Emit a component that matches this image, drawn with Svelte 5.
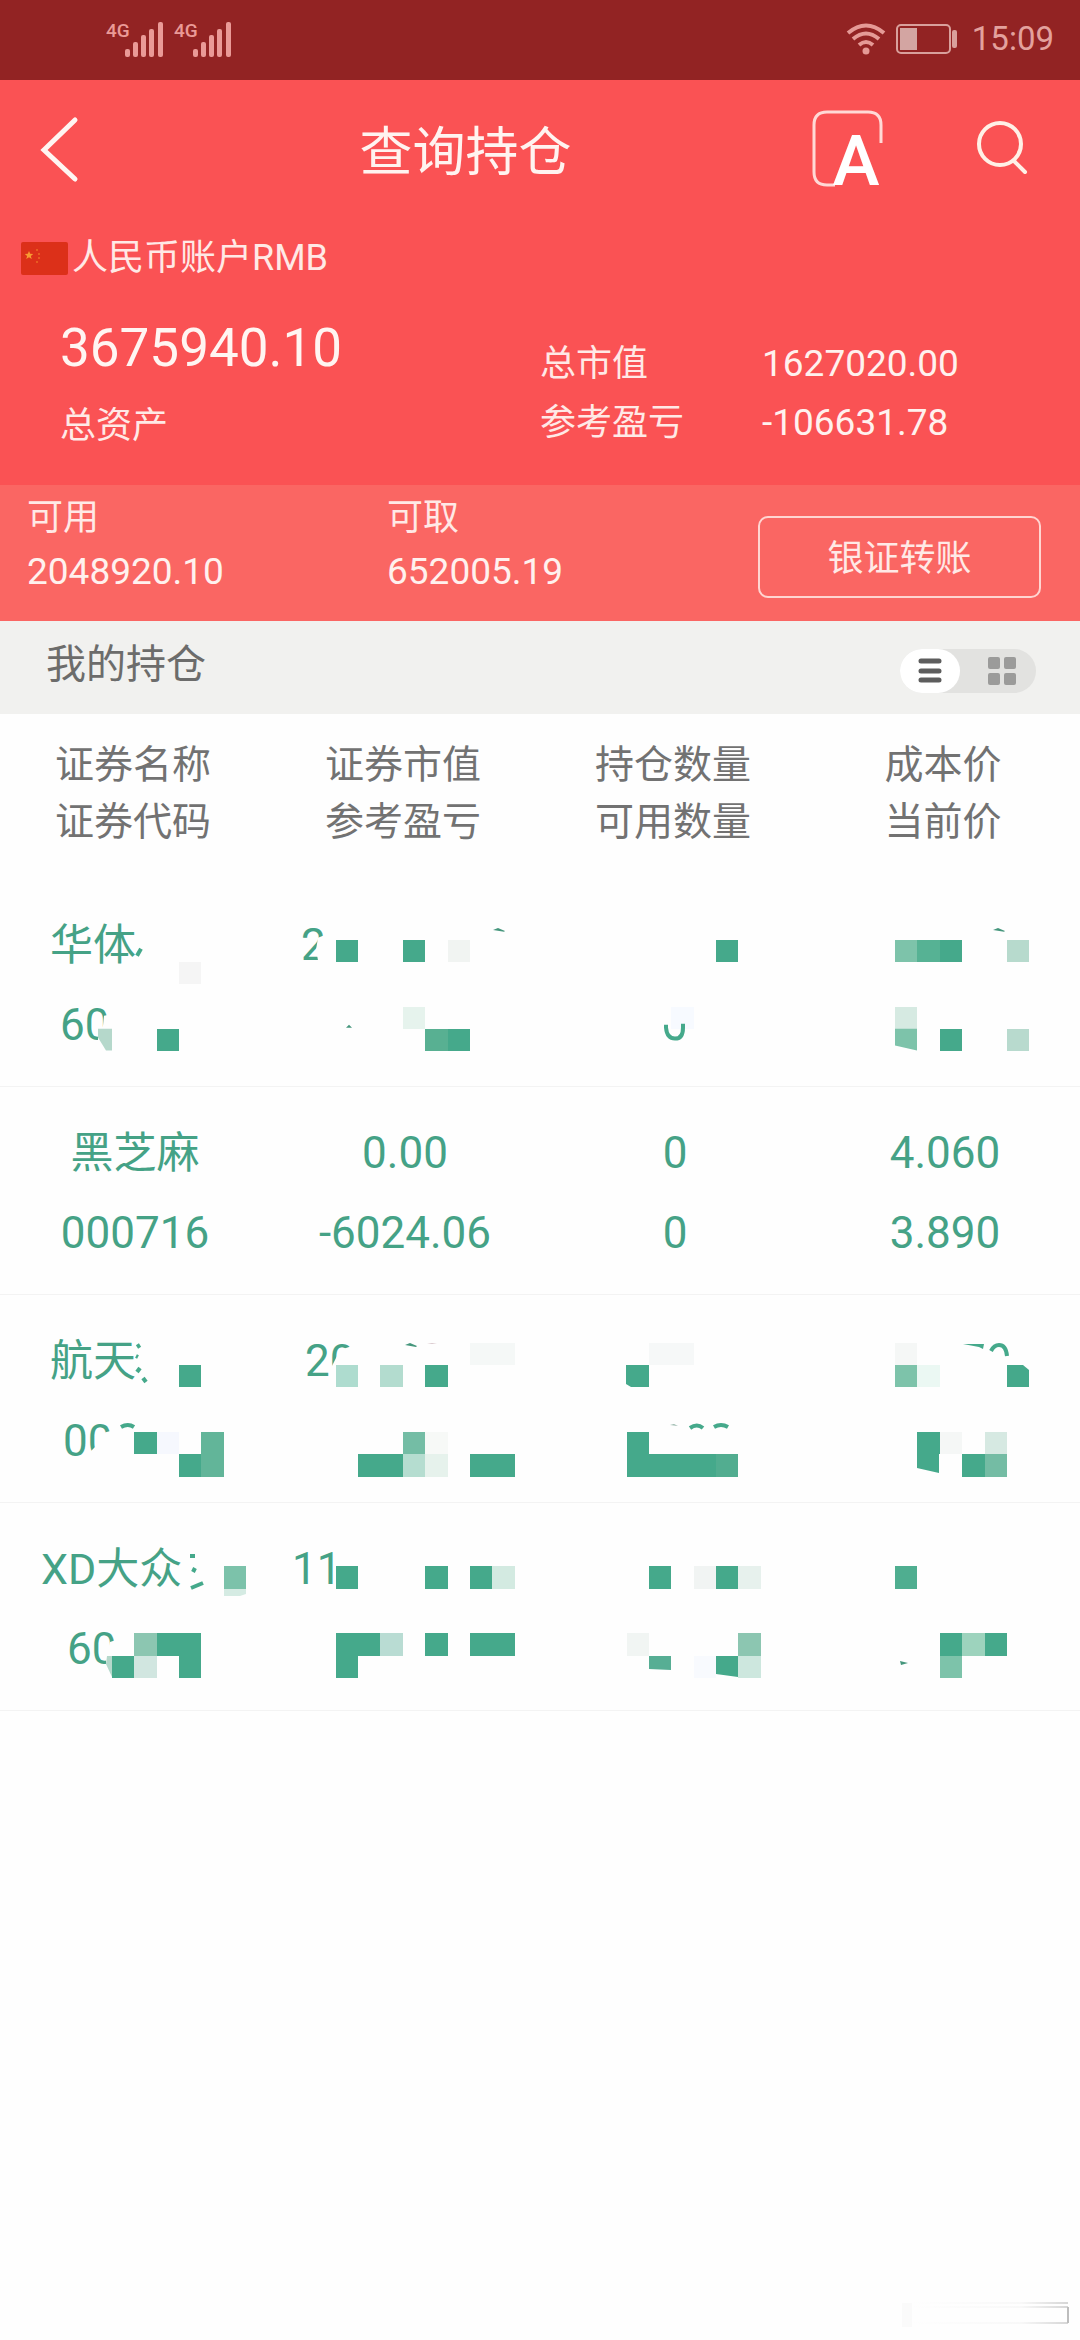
<script lang="ts">
	type Line = { text: string; width?: number };
	type Block = [col: number, row: number, color?: string];
	type Shape = { points: string; fill: string };
	type Holding = {
		top: number;
		cells: [Line, Line][];
		erased?: string[];
		blocks?: Block[];
		shapes?: Shape[];
		strokes?: string[];
	};

	const GREEN = '#45a98b';
	const CELL = 22.375;
	const ROW_HEIGHT = 208;

	const headings = [
		['证券名称', '证券代码'],
		['证券市值', '参考盈亏'],
		['持仓数量', '可用数量'],
		['成本价', '当前价']
	];

	// width is the room taken by the full value when only its start is readable
	const holdings: Holding[] = [
		{
			top: 879,
			cells: [
				[{ text: '华体', width: 170 }, { text: '60', width: 150 }],
				[{ text: '2', width: 208 }, { text: '' }],
				[{ text: '' }, { text: '' }],
				[{ text: '' }, { text: '' }]
			],
			erased: ['318,938 328,934 328,966 319,966 316,950', '104,1016 114,1014 114,1046 98,1046 98,1034 103,1026'],
			blocks: [
				[8, 43, '#f5f5f5'],
				[15, 42],
				[18, 42],
				[20, 42, '#f1f4f2'],
				[7, 46],
				[18, 45, '#e6f3ed'],
				[19, 46, '#58b092'],
				[20, 46],
				[32, 42],
				[30, 45, '#f7faff'],
				[40, 42, '#7dc3aa'],
				[41, 42, '#56b294'],
				[42, 42],
				[45, 42, '#b7dacd'],
				[40, 45, '#d6eae2'],
				[42, 46],
				[45, 46, '#b8dace']
			],
			shapes: [
				{ points: '98,1029 112,1029 112,1051 106,1051 98,1038', fill: '#b5d8cb' },
				{ points: '895,1029 917,1029 917,1051 895,1046', fill: '#7dc3aa' },
				{ points: '346,1028 349,1025 352,1028', fill: '#45967c' },
				{ points: '493,930 498,928 505,931 504,932', fill: '#45967c' },
				{ points: '993,930 998,928 1005,931 1004,932', fill: '#45967c' }
			],
			strokes: ['M137 956l4-7', 'M666 1025v3q1 11 9 11q8 0 8-11v-4']
		},
		{
			top: 1087,
			cells: [
				[{ text: '黑芝麻' }, { text: '000716' }],
				[{ text: '0.00' }, { text: '-6024.06' }],
				[{ text: '0' }, { text: '0' }],
				[{ text: '4.060' }, { text: '3.890' }]
			]
		},
		{
			top: 1295,
			cells: [
				[{ text: '航天', width: 170 }, { text: '00', width: 144 }],
				[{ text: '20', width: 200 }, { text: '' }],
				[{ text: '' }, { text: '' }],
				[{ text: '' }, { text: '' }]
			],
			erased: ['103,1433 114,1430 114,1462 88,1462 90,1452 96,1446', '340,1350 358,1344 358,1384 330,1384 332,1366'],
			blocks: [
				[8, 61],
				[15, 61, '#aedccf'],
				[17, 61, '#b3dccf'],
				[19, 61],
				[21, 60, '#f5f8f7'],
				[22, 60, '#f5f8f7'],
				[6, 64],
				[7, 64, '#f6f8fe'],
				[8, 65],
				[9, 64, '#62b599'],
				[9, 65, '#62b599'],
				[16, 65],
				[17, 65],
				[18, 64, '#74bda5'],
				[19, 64, '#f7f9f7'],
				[18, 65, '#b5ddd0'],
				[19, 65, '#e6f2ec'],
				[21, 65],
				[22, 65],
				[29, 60, '#f6f8f8'],
				[30, 60, '#f6f8f8'],
				[28, 64],
				[28, 65],
				[29, 65],
				[30, 65],
				[31, 65],
				[32, 65, '#52ad90'],
				[40, 60, '#f5f7f6'],
				[40, 61, '#7dc3aa'],
				[41, 61, '#ebf8f3'],
				[41, 64],
				[42, 64, '#f5f7f6'],
				[43, 65],
				[44, 64, '#d6e9e2'],
				[44, 65, '#74bca4']
			],
			shapes: [
				{ points: '626,1365 649,1365 649,1387 631,1387 626,1384', fill: GREEN },
				{ points: '1007,1365 1023,1365 1029,1370 1029,1387 1007,1387', fill: GREEN },
				{ points: '917,1454 939,1454 939,1473 917,1468', fill: GREEN },
				{ points: '405,1345 410,1343 417,1346 416,1347', fill: '#45967c' },
				{ points: '427,1344 432,1343 437,1344', fill: '#d9c8cc' },
				{ points: '963,1344 984,1344 983,1349 979,1347', fill: GREEN },
				{ points: '670,1425 674,1424 678,1426', fill: '#9ab8ad' }
			],
			strokes: [
				'M137 1347l3-2',
				'M136 1356l2 1',
				'M137 1372l3-4',
				'M143 1378l3 4',
				'M121 1427q7-4 13 0',
				'M690 1428q7-5 13 0',
				'M714 1427q7-4 14 0',
				'M991 1351q3-6 8-6q7 0 8 11'
			]
		},
		{
			top: 1503,
			cells: [
				[{ text: 'XD大众', width: 188 }, { text: '60', width: 136 }],
				[{ text: '11', width: 226 }, { text: '' }],
				[{ text: '' }, { text: '' }],
				[{ text: '' }, { text: '' }]
			],
			erased: ['110,1642 122,1638 122,1670 106,1670 106,1658'],
			blocks: [
				[10, 70, '#7cc2aa'],
				[15, 70],
				[19, 70],
				[21, 70],
				[22, 70, '#d3eae1'],
				[5, 74],
				[6, 73, '#8cc6b1'],
				[6, 74, '#d1e6e0'],
				[7, 73],
				[8, 73],
				[8, 74],
				[15, 73],
				[15, 74],
				[16, 73],
				[17, 73, '#b9dcd3'],
				[19, 73],
				[21, 73],
				[22, 73],
				[29, 70],
				[31, 70, '#f1f4f3'],
				[32, 70],
				[33, 70, '#e7f1ed'],
				[28, 73, '#f1f5f3'],
				[31, 74, '#f8fafe'],
				[33, 73, '#8cc6b1'],
				[33, 74, '#cde7de'],
				[40, 70, '#4fae90'],
				[42, 73],
				[43, 73, '#9dd3bd'],
				[44, 73],
				[42, 74, '#7dc3aa']
			],
			shapes: [
				{ points: '224,1589 246,1589 246,1594 240,1596 224,1596', fill: '#d5ebe3' },
				{ points: '107,1656 112,1656 112,1677 106,1664', fill: '#b5d8cb' },
				{ points: '649,1656 671,1656 671,1670 649,1669', fill: '#57ae94' },
				{ points: '716,1656 738,1656 738,1677 716,1674', fill: GREEN },
				{ points: '900,1661 908,1663 901,1665', fill: '#45967c' }
			],
			strokes: ['M190 1556h5', 'M193 1572l2-4', 'M191 1588l12-5']
		}
	];

	let view = $state('list');
</script>

<main>
	<div class="status">
		<svg class="signal" width="126" height="40" viewBox="0 0 126 40" aria-hidden="true">
			{#each [0, 68] as x}
				<g transform="translate({x} 0)">
					<text x="0" y="17">4G</text>
					<rect x="19" y="29" width="5" height="8" rx="2" />
					<rect x="27" y="22" width="5" height="15" rx="2" />
					<rect x="35" y="15" width="5" height="22" rx="2" />
					<rect x="43" y="9" width="5" height="28" rx="2" />
					<rect x="52" y="2" width="5" height="35" rx="2" />
				</g>
			{/each}
		</svg>
		<div class="status-right">
			<svg width="40" height="34" viewBox="0 0 40 34" aria-hidden="true">
				<g fill="none" stroke="#e59a96" stroke-width="4">
					<path d="M2 11q18-15 36 0" />
					<path d="M7 17q13-11 26 0" />
					<path d="M13 23q7-6 14 0" />
				</g>
				<circle cx="20" cy="29" r="3.5" fill="#e59a96" />
			</svg>
			<svg width="62" height="30" viewBox="0 0 62 30" aria-hidden="true">
				<rect x="1" y="1" width="53" height="28" rx="4" fill="none" stroke="#d9a09c" stroke-width="2" />
				<rect x="4" y="4" width="17" height="22" fill="#d3a5a2" />
				<rect x="56" y="6" width="5" height="18" rx="2" fill="#d9a09c" />
			</svg>
			<time>15:09</time>
		</div>
	</div>

	<header>
		<button class="back" aria-label="返回">
			<svg width="44" height="72" viewBox="0 0 44 72">
				<path d="M37 6L6 36l31 29" fill="none" stroke="#fff5f2" stroke-width="5" stroke-linecap="round" />
			</svg>
		</button>
		<h1>查询持仓</h1>
		<div class="actions">
			<button aria-label="字体">
				<svg class="font-icon" width="72" height="78" viewBox="0 0 72 78">
					<path
						d="M24 76H16Q3 76 3 63V16Q3 3 16 3H57Q70 3 70 16V34"
						fill="none"
						stroke="#ffd9d6"
						stroke-width="3"
					/>
					<text x="45" y="76" text-anchor="middle">A</text>
				</svg>
			</button>
			<button aria-label="搜索">
				<svg width="54" height="60" viewBox="0 0 54 60">
					<g fill="none" stroke="#fff0e6" stroke-width="4" stroke-linecap="round">
						<circle cx="25" cy="26" r="21" />
						<path d="M39 43l11 11" />
					</g>
				</svg>
			</button>
		</div>
	</header>

	<section class="account">
		<div class="currency">
			<svg width="47" height="33" viewBox="0 0 47 33" aria-hidden="true">
				<rect width="47" height="33" rx="2" fill="#dc3019" />
				<path
					d="M8 9l1.200 2.800 3 .2-2.300 2 .8 3L8 15.300 5.300 17l.8-3-2.300-2 3-.2z"
					fill="#f79a32"
				/>
				<g fill="#ec6a25">
					<circle cx="16" cy="8" r="1" />
					<circle cx="18" cy="12" r="1" />
					<circle cx="18" cy="16" r="1" />
					<circle cx="16" cy="20" r="1" />
				</g>
			</svg>
			<span>人民币账户RMB</span>
		</div>
		<div class="summary">
			<div class="total">
				<strong>3675940.10</strong>
				<span>总资产</span>
			</div>
			<dl>
				<dt>总市值</dt>
				<dd>1627020.00</dd>
				<dt>参考盈亏</dt>
				<dd>-106631.78</dd>
			</dl>
		</div>
	</section>

	<section class="funds">
		<div class="fund">
			<span>可用</span>
			<span class="amount">2048920.10</span>
		</div>
		<div class="fund">
			<span>可取</span>
			<span class="amount">652005.19</span>
		</div>
		<div class="transfer">
			<button>银证转账</button>
		</div>
	</section>

	<div class="section-bar">
		<h2>我的持仓</h2>
		<div class="toggle">
			<button class:active={view === 'list'} aria-label="列表" onclick={() => (view = 'list')}>
				<svg width="24" height="28" viewBox="0 0 24 28">
					<path d="M3 4h18M3 14h18M3 23h18" stroke="#5d5d5d" stroke-width="5" stroke-linecap="round" />
				</svg>
			</button>
			<button class:active={view === 'grid'} aria-label="宫格" onclick={() => (view = 'grid')}>
				<svg width="30" height="28" viewBox="0 0 30 28" fill="#9b9b9a">
					<rect x="1" y="0" width="12" height="12" rx="2" />
					<rect x="17" y="0" width="12" height="12" rx="2" />
					<rect x="1" y="16" width="12" height="12" rx="2" />
					<rect x="17" y="16" width="12" height="12" rx="2" />
				</svg>
			</button>
		</div>
	</div>

	<table>
		<thead>
			<tr>
				{#each headings as [first, second]}
					<th scope="col"><span>{first}</span><span>{second}</span></th>
				{/each}
			</tr>
		</thead>
		<tbody>
			{#each holdings as row}
				<tr>
					{#each row.cells as cell, i}
						<td>
							{#each cell as line, j}
								<div class="line" class:name={i === 0 && j === 0}>
									{#if line.width}
										<span class="partial" style="width: {line.width}px">{line.text}</span>
									{:else}
										{line.text}
									{/if}
								</div>
							{/each}
							{#if i === 0 && row.blocks}
								<svg
									class="mosaic"
									viewBox="0 {row.top} 1080 {ROW_HEIGHT}"
									preserveAspectRatio="none"
									aria-hidden="true"
								>
									{#each row.erased ?? [] as points}
										<polygon {points} fill="#fefefe" />
									{/each}
									<g shape-rendering="crispEdges">
										{#each row.blocks as [col, line, color]}
											<rect x={col * CELL} y={line * CELL} width={CELL} height={CELL} fill={color ?? GREEN} />
										{/each}
									</g>
									{#each row.shapes ?? [] as shape}
										<polygon points={shape.points} fill={shape.fill} />
									{/each}
									{#each row.strokes ?? [] as d}
										<path {d} fill="none" stroke={GREEN} stroke-width="4" />
									{/each}
								</svg>
							{/if}
						</td>
					{/each}
				</tr>
			{/each}
		</tbody>
	</table>

	<footer>
		<svg width="180" height="30" viewBox="0 0 180 30" aria-hidden="true">
			<defs>
				<linearGradient id="fade">
					<stop offset="0" stop-color="#fefefe" />
					<stop offset="0.7" stop-color="#f8f8f8" />
					<stop offset="1" stop-color="#d6d6d6" />
				</linearGradient>
			</defs>
			<rect x="2" y="4" width="10" height="24" fill="#fafafa" />
			<rect x="12" y="3" width="156" height="2" fill="url(#fade)" />
			<rect x="12" y="7" width="156" height="2" fill="url(#fade)" />
			<rect x="12" y="23" width="156" height="2" fill="url(#fade)" />
			<rect x="167" y="8" width="2" height="16" fill="#bdbdbd" />
		</svg>
	</footer>
</main>

<style>
	:global(body) {
		margin: 0;
		background: #fefefe;
	}

	main {
		display: flex;
		flex-direction: column;
		min-height: 100vh;
		font-family: Roboto, 'Noto Sans CJK SC', sans-serif;
		font-size: 36px;
		line-height: 40px;
		color: #ffe9e6;
	}

	button {
		margin: 0;
		padding: 0;
		border: 0;
		background: none;
		color: inherit;
		font: inherit;
		cursor: pointer;
	}

	svg {
		display: block;
		overflow: visible;
	}

	.status {
		display: flex;
		justify-content: space-between;
		align-items: center;
		height: 80px;
		padding: 0 26px 0 106px;
		background: #922323;
		color: #e3a19d;
	}

	.signal {
		fill: #ea9a97;
	}

	.signal text {
		font-size: 19px;
		font-weight: 500;
	}

	.status-right {
		display: flex;
		align-items: center;
		gap: 10px;
		padding-bottom: 2px;
	}

	time {
		margin-left: 4px;
		font-size: 33px;
	}

	header {
		display: flex;
		align-items: center;
		height: 140px;
		background: #fa5254;
	}

	.back {
		width: 120px;
		padding-left: 38px;
	}

	h1 {
		flex: 1;
		margin: 0;
		padding-top: 6px;
		font-size: 53px;
		font-weight: 400;
		line-height: 60px;
		text-align: center;
		color: #fff3f0;
	}

	.actions {
		display: flex;
		align-items: center;
		gap: 92px;
		padding: 0 51px 4px 0;
	}

	.font-icon text {
		font-size: 71px;
		font-weight: 500;
		fill: #fff;
	}

	.account {
		padding: 18px 0 39px;
		background: #fa5254;
	}

	.currency {
		display: flex;
		align-items: center;
		gap: 4px;
		padding-left: 21px;
	}

	.summary {
		display: grid;
		grid-template-columns: 1fr 1fr;
		padding-top: 38px;
	}

	.total {
		display: flex;
		flex-direction: column;
		gap: 26px;
		padding-left: 60px;
	}

	.total strong {
		font-size: 53px;
		font-weight: 400;
		line-height: 64px;
		color: #fff5f2;
	}

	dl {
		display: grid;
		grid-template-columns: 222px 1fr;
		align-content: start;
		row-gap: 19px;
		margin: 28px 0 0;
	}

	dd {
		margin: 0;
	}

	dd,
	.amount {
		font-size: 37px;
		color: #fff1ee;
	}

	.funds {
		display: grid;
		grid-template-columns: repeat(3, 1fr);
		height: 136px;
		background: #fa6663;
	}

	.fund {
		display: flex;
		flex-direction: column;
		gap: 14px;
		padding: 13px 0 0 27px;
	}

	.transfer {
		padding: 31px 39px 0 38px;
	}

	.transfer button {
		width: 100%;
		height: 82px;
		padding-top: 4px;
		border: 2px solid #ffd5d1;
		border-radius: 10px;
	}

	.section-bar {
		display: flex;
		justify-content: space-between;
		align-items: center;
		height: 93px;
		padding: 0 44px 0 46px;
		background: #f1f1ef;
	}

	h2 {
		margin: 0;
		padding-bottom: 6px;
		font-size: 40px;
		font-weight: 400;
		color: #6c6c6b;
	}

	.toggle {
		display: flex;
		margin-top: 6px;
		border-radius: 22px;
		background: #e2e2e0;
	}

	.toggle button {
		display: flex;
		justify-content: center;
		align-items: center;
		width: 68px;
		height: 44px;
	}

	.toggle .active {
		width: 60px;
		margin-right: 8px;
		border-radius: 22px;
		background: #fff;
	}

	table {
		width: 100%;
		border-collapse: collapse;
		table-layout: fixed;
		text-align: center;
	}

	th {
		padding: 23px 4px 28px 0;
		font-size: 39px;
		font-weight: 400;
		line-height: 57px;
		color: #727272;
	}

	th span {
		display: block;
	}

	tbody tr {
		position: relative;
	}

	td {
		padding: 26px 0 21px;
		border-bottom: 1px solid #f3f3f3;
		color: #45a286;
	}

	.line {
		height: 80px;
		font-size: 44px;
		line-height: 80px;
		white-space: nowrap;
	}

	.name {
		font-size: 43px;
	}

	.partial {
		display: inline-block;
		text-align: left;
	}

	.mosaic {
		position: absolute;
		inset: 0;
		width: 100%;
		height: 100%;
	}

	footer {
		display: flex;
		justify-content: flex-end;
		margin-top: auto;
		padding: 0 0 11px;
	}
</style>
